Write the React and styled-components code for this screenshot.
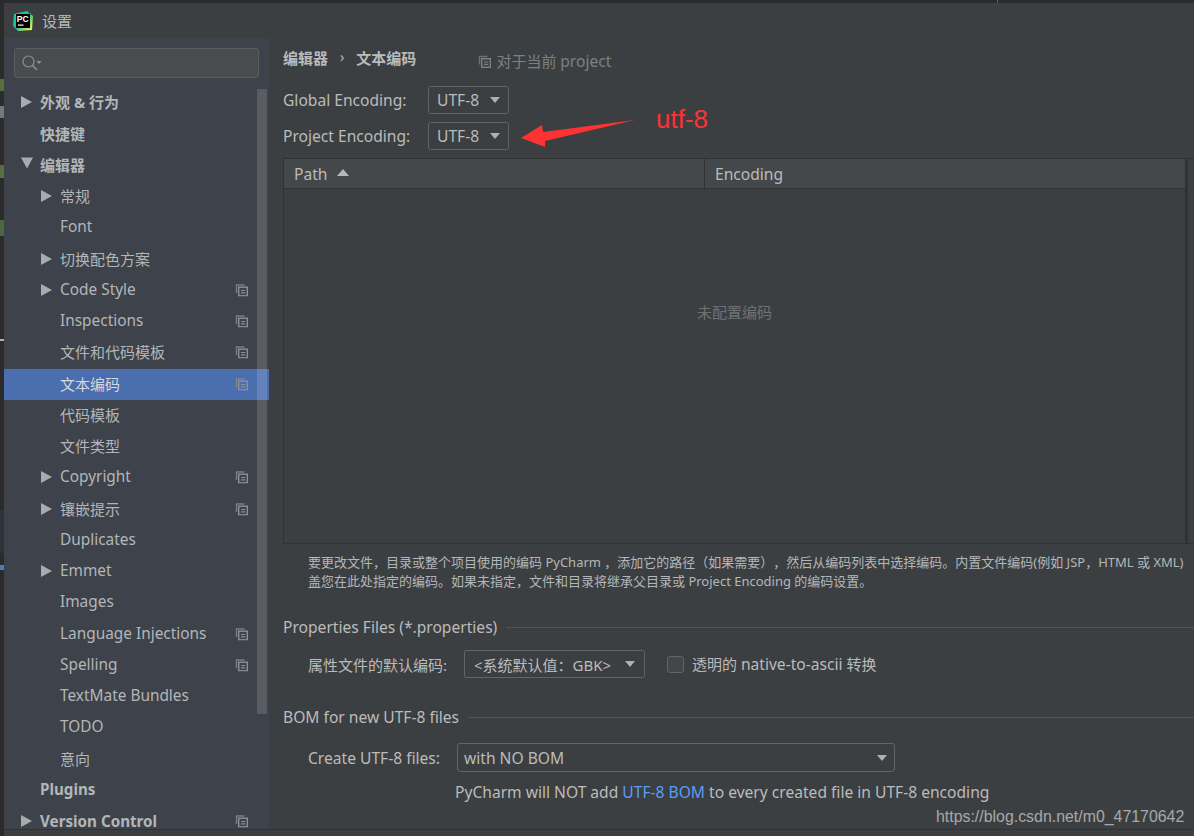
import React from 'react';
import styled, { createGlobalStyle } from 'styled-components';

const GlobalStyle = createGlobalStyle`
  html, body { margin: 0; padding: 0; background: #2b2b2b; }
  body {
    width: 1194px;
    height: 836px;
    overflow: hidden;
    font-family: "Noto Sans", "Noto Sans CJK SC", sans-serif;
    color: #bbbbbb;
    text-spacing-trim: space-all;
  }
`;

const Screen = styled.div`
  position: relative;
  width: 1194px;
  height: 836px;
  padding: 3px 0 0 4px;
  box-sizing: border-box;
  overflow: hidden;
`;

const TopTick = styled.div`
  position: absolute;
  left: 997px;
  top: 0;
  width: 1px;
  height: 3px;
  background: #5a5a5a;
`;

// bits of the IDE window peeking out behind the dialog
const Scrap = styled.div`
  position: absolute;
  left: 0;
  top: ${(p) => p.$top}px;
  width: 4px;
  height: ${(p) => p.$h}px;
  background: ${(p) => p.$c};
`;

const Dialog = styled.div`
  width: 1190px;
  height: 833px;
  background: #3c3f41;
  display: flex;
  flex-direction: column;
`;

const TitleBar = styled.div`
  height: 35px;
  flex: none;
  display: flex;
  align-items: center;
  gap: 9px;
  padding-left: 9px;
  font-size: 15px;
  color: #b4b8ba;
`;

const Body = styled.div`
  flex: 1;
  min-height: 0;
  display: flex;
`;

const Footer = styled.div`
  height: 6px;
  flex: none;
  border-top: 1px solid #323232;
`;

const Sidebar = styled.div`
  position: relative;
  width: 265px;
  flex: none;
  background: #3e424a;
  overflow: hidden;
`;

const Search = styled.div`
  height: 30px;
  width: 245px;
  box-sizing: border-box;
  margin: 10px 10px 9.75px;
  border: 1px solid #5b5e60;
  border-radius: 3px;
  background: #494c4d;
  display: flex;
  align-items: center;
  padding-left: 6px;
`;

const Row = styled.div`
  height: 31.25px;
  display: flex;
  align-items: center;
  box-sizing: border-box;
  padding: 0 0 3px ${(p) => (p.$sub ? 56 : 36)}px;
  position: relative;
  font-size: ${(p) => (p.$latin ? (p.$bold ? 15.2 : 15.4) : 15)}px;
  font-weight: ${(p) => (p.$bold ? 700 : 400)};
  color: ${(p) => (p.$selected ? '#d5d8dc' : '#b3b6b9')};
  background: ${(p) => (p.$selected ? '#4b6eaf' : 'transparent')};
  white-space: nowrap;
`;

const Arrow = styled.span`
  position: absolute;
  left: ${(p) => (p.$sub ? 37 : 17)}px;
  top: calc(50% - 1px);
  transform: translateY(-50%);
  width: 0;
  height: 0;
  ${(p) =>
    p.$open
      ? `border-left: 6px solid transparent; border-right: 6px solid transparent; border-top: 11px solid #a9acae; margin-top: -2px;`
      : `border-top: 6px solid transparent; border-bottom: 6px solid transparent; border-left: 11px solid #a9acae;`}
`;

const RowIcon = styled.span`
  position: absolute;
  left: 231px;
  top: calc(50% - 1px);
  transform: translateY(-50%);
  display: flex;
`;

const ScrollThumb = styled.div`
  position: absolute;
  left: 253px;
  top: 51px;
  width: 10px;
  height: 625px;
  background: rgba(255, 255, 255, 0.14);
`;

const Main = styled.div`
  flex: 1;
  min-width: 0;
  padding: 9px 0 0 14px;
  overflow: hidden;
`;

const Crumbs = styled.div`
  display: flex;
  align-items: flex-start;
  height: 35px;
  font-size: 15px;
  font-weight: 700;
  color: #b9bbbd;
`;

const CrumbSep = styled.span`
  margin: 0 12px;
  font-weight: 400;
  font-size: 14px;
`;

const ScopeNote = styled.span`
  margin: 3px 0 0 62px;
  display: inline-flex;
  align-items: center;
  gap: 5px;
  font-size: 15px;
  font-weight: 400;
  color: #7c8083;
`;

const Lat = styled.span`
  font-size: 15.6px;
`;

const FormRow = styled.div`
  display: flex;
  align-items: center;
  height: ${(p) => p.$h || 36}px;
  margin-top: ${(p) => p.$mt || 0}px;
  font-size: 15px;
  padding-left: ${(p) => p.$indent || 0}px;
  white-space: nowrap;
`;

const FieldLabel = styled.span`
  width: ${(p) => p.$w}px;
  flex: none;
`;

const Combo = styled.div`
  flex: none;
  width: ${(p) => p.$w}px;
  height: ${(p) => p.$h || 28}px;
  box-sizing: border-box;
  border: 1px solid #626567;
  border-radius: 3px;
  display: flex;
  align-items: center;
  justify-content: space-between;
  padding: 0 ${(p) => p.$pr || 8}px 0 ${(p) => p.$pl || 8}px;
  font-size: 15px;
`;

const Caret = styled.span`
  width: 0;
  height: 0;
  border-left: 5.5px solid transparent;
  border-right: 5.5px solid transparent;
  border-top: 6.5px solid #aeb1b3;
`;

const Table = styled.div`
  margin-top: 4px;
  height: 386px;
  width: 920px;
  box-sizing: border-box;
  border: 1px solid #323232;
  border-right: none;
  display: flex;
  flex-direction: column;
`;

const TableHead = styled.div`
  height: 30px;
  width: 904px;
  flex: none;
  display: grid;
  grid-template-columns: 421px 1fr;
  font-size: 15.6px;
  border-right: 3px solid #323232;
  box-sizing: border-box;
`;

const HeadCell = styled.div`
  display: flex;
  align-items: center;
  gap: 10px;
  padding-left: 10px;
  background: #45484a;
  border-bottom: 1px solid #323232;
  border-right: ${(p) => (p.$last ? 'none' : '1px solid #323232')};
`;

const SortUp = styled.span`
  width: 0;
  height: 0;
  border-left: 6px solid transparent;
  border-right: 6px solid transparent;
  border-bottom: 7px solid #b6b9bb;
  margin-top: -3px;
`;

const TableEmpty = styled.div`
  flex: 1;
  width: 904px;
  display: flex;
  align-items: center;
  justify-content: center;
  font-size: 15px;
  color: #6f7274;
  padding-bottom: 110px;
  box-sizing: border-box;
  border-right: 3px solid #323232;
`;

const Help = styled.div`
  margin: 9px 0 0 25px;
  font-size: 13px;
  line-height: 19px;
  white-space: nowrap;
  color: #b4b7b9;
`;

const Group = styled.div`
  display: flex;
  align-items: center;
  gap: 9px;
  height: 22px;
  font-size: 15.6px;
  margin-top: ${(p) => p.$mt}px;
  white-space: nowrap;
  &::after {
    content: '';
    flex: 1;
    height: 1px;
    background: #515456;
  }
`;

const CheckBox = styled.span`
  width: 17px;
  height: 17px;
  box-sizing: border-box;
  flex: none;
  margin: 0 8px 0 22px;
  border: 1px solid #626567;
  border-radius: 3px;
  background: #43474a;
`;

const Note = styled.div`
  margin: 9px 0 0 172px;
  font-size: 15.6px;
  white-space: nowrap;
`;

const Link = styled.span`
  color: #589df6;
`;

const Annotation = styled.svg`
  position: absolute;
  left: 518px;
  top: 115px;
`;

const RedLabel = styled.div`
  position: absolute;
  left: 656px;
  top: 104px;
  font-family: "Liberation Sans", sans-serif;
  font-size: 26px;
  color: #fc3233;
`;

const Watermark = styled.div`
  position: absolute;
  left: 936px;
  top: 808px;
  font-family: "Liberation Sans", sans-serif;
  font-size: 15.9px;
  color: #a8a8a8;
`;

const CopyIcon = ({ color = '#8d9093' }) => (
  <svg width="13" height="13" viewBox="0 0 13 13" fill="none" stroke={color}>
    <path d="M9.5 1.5 H1.5 V9.5" strokeWidth="1.4" opacity="0.75" />
    <rect x="3.7" y="3.7" width="8.6" height="8.6" strokeWidth="1.4" />
    <path d="M6 7 H10.2 M6 9.4 H10.2" strokeWidth="1.2" />
  </svg>
);

const PcLogo = () => (
  <svg width="20" height="20" viewBox="0 0 20 20">
    <defs>
      <linearGradient id="pcg" x1="0" y1="0" x2="1" y2="1">
        <stop offset="0" stopColor="#21d789" />
        <stop offset="0.5" stopColor="#19b8a0" />
        <stop offset="0.75" stopColor="#a8e060" />
        <stop offset="1" stopColor="#fcf84a" />
      </linearGradient>
    </defs>
    <path d="M1 3 L14 0 L20 5 L19 19 L5 20 L0 15 Z" fill="url(#pcg)" />
    <rect x="3" y="3" width="14" height="14" fill="#000" />
    <text x="3.8" y="10.5" fontFamily="Liberation Sans, sans-serif" fontSize="8.6" fontWeight="700" fill="#fff">PC</text>
    <rect x="5" y="13.5" width="5.5" height="1.2" fill="#fff" />
  </svg>
);

const SearchIcon = () => (
  <svg width="22" height="18" viewBox="0 0 22 18" fill="none" stroke="#8f9295" strokeWidth="1.2">
    <circle cx="7.5" cy="7.5" r="5.5" />
    <path d="M11.5 11.5 L16 16" strokeWidth="1.5" />
    <path d="M15.5 7 H20.5 L18 10 Z" fill="#8f9295" stroke="none" />
  </svg>
);

const treeItems = [
  { label: '外观 & 行为', bold: true, arrow: 'closed' },
  { label: '快捷键', bold: true },
  { label: '编辑器', bold: true, arrow: 'open' },
  { label: '常规', sub: true, arrow: 'closed' },
  { label: 'Font', sub: true },
  { label: '切换配色方案', sub: true, arrow: 'closed' },
  { label: 'Code Style', sub: true, arrow: 'closed', copy: true },
  { label: 'Inspections', sub: true, copy: true },
  { label: '文件和代码模板', sub: true, copy: true },
  { label: '文本编码', sub: true, copy: true, selected: true },
  { label: '代码模板', sub: true },
  { label: '文件类型', sub: true },
  { label: 'Copyright', sub: true, arrow: 'closed', copy: true },
  { label: '镶嵌提示', sub: true, arrow: 'closed', copy: true },
  { label: 'Duplicates', sub: true },
  { label: 'Emmet', sub: true, arrow: 'closed' },
  { label: 'Images', sub: true },
  { label: 'Language Injections', sub: true, copy: true },
  { label: 'Spelling', sub: true, copy: true },
  { label: 'TextMate Bundles', sub: true },
  { label: 'TODO', sub: true },
  { label: '意向', sub: true },
  { label: 'Plugins', bold: true },
  { label: 'Version Control', bold: true, arrow: 'closed', copy: true },
];

const scraps = [
  { top: 79, h: 12, c: '#56703f' },
  { top: 106, h: 12, c: '#6d7a80' },
  { top: 165, h: 13, c: '#56703f' },
  { top: 220, h: 16, c: '#4c6640' },
  { top: 339, h: 2, c: '#b0b4b8' },
  { top: 510, h: 43, c: '#2e3338' },
  { top: 565, h: 5, c: '#4a7fb5' },
];

export default function App() {
  return (
    <>
      <GlobalStyle />
      <Screen>
        <TopTick />
        {scraps.map((s) => (
          <Scrap key={s.top} $top={s.top} $h={s.h} $c={s.c} />
        ))}
        <Dialog>
          <TitleBar>
            <PcLogo />
            设置
          </TitleBar>
          <Body>
            <Sidebar>
              <Search>
                <SearchIcon />
              </Search>
              {treeItems.map((item) => (
                <Row
                  key={item.label}
                  $sub={item.sub}
                  $bold={item.bold}
                  $selected={item.selected}
                  $latin={/^[A-Za-z]/.test(item.label)}
                >
                  {item.arrow && <Arrow $sub={item.sub} $open={item.arrow === 'open'} />}
                  {item.label}
                  {item.copy && (
                    <RowIcon>
                      <CopyIcon />
                    </RowIcon>
                  )}
                </Row>
              ))}
              <ScrollThumb />
            </Sidebar>
            <Main>
              <Crumbs>
                编辑器
                <CrumbSep>›</CrumbSep>
                文本编码
                <ScopeNote>
                  <CopyIcon color="#7c8083" />
                  <span>
                    对于当前 <Lat>project</Lat>
                  </span>
                </ScopeNote>
              </Crumbs>
              <FormRow>
                <FieldLabel $w={145}>
                  <Lat>Global Encoding:</Lat>
                </FieldLabel>
                <Combo $w={81}>
                  <Lat>UTF-8</Lat>
                  <Caret />
                </Combo>
              </FormRow>
              <FormRow>
                <FieldLabel $w={145}>
                  <Lat>Project Encoding:</Lat>
                </FieldLabel>
                <Combo $w={81}>
                  <Lat>UTF-8</Lat>
                  <Caret />
                </Combo>
              </FormRow>
              <Table>
                <TableHead>
                  <HeadCell>
                    Path
                    <SortUp />
                  </HeadCell>
                  <HeadCell $last>Encoding</HeadCell>
                </TableHead>
                <TableEmpty>未配置编码</TableEmpty>
              </Table>
              <Help>
                要更改文件，目录或整个项目使用的编码 PyCharm ，添加它的路径（如果需要），然后从编码列表中选择编码。内置文件编码(例如 JSP，HTML 或 XML)
                <br />
                盖您在此处指定的编码。如果未指定，文件和目录将继承父目录或 Project Encoding 的编码设置。
              </Help>
              <Group $mt={25}>Properties Files (*.properties)</Group>
              <FormRow $indent={25} $h={28} $mt={12}>
                <FieldLabel $w={156}>属性文件的默认编码:</FieldLabel>
                <Combo $w={181} $pl={9} $pr={9}>
                  &lt;系统默认值：GBK&gt;
                  <Caret />
                </Combo>
                <CheckBox />
                <span>
                  透明的 <Lat>native-to-ascii</Lat> 转换
                </span>
              </FormRow>
              <Group $mt={28}>BOM for new UTF-8 files</Group>
              <FormRow $indent={25} $h={29} $mt={15}>
                <FieldLabel $w={149}>
                  <Lat>Create UTF-8 files:</Lat>
                </FieldLabel>
                <Combo $w={438} $h={29} $pl={6} $pr={7}>
                  <Lat>with NO BOM</Lat>
                  <Caret />
                </Combo>
              </FormRow>
              <Note>
                PyCharm will NOT add <Link>UTF-8 BOM</Link> to every created file in UTF-8 encoding
              </Note>
            </Main>
          </Body>
          <Footer />
        </Dialog>
        <Annotation width="120" height="36" viewBox="0 0 120 36">
          <path d="M3 23 L24 10 L25 17 L117 5 L27 26 L27 32 Z" fill="#fc3233" />
        </Annotation>
        <RedLabel>utf-8</RedLabel>
        <Watermark>https://blog.csdn.net/m0_47170642</Watermark>
      </Screen>
    </>
  );
}
